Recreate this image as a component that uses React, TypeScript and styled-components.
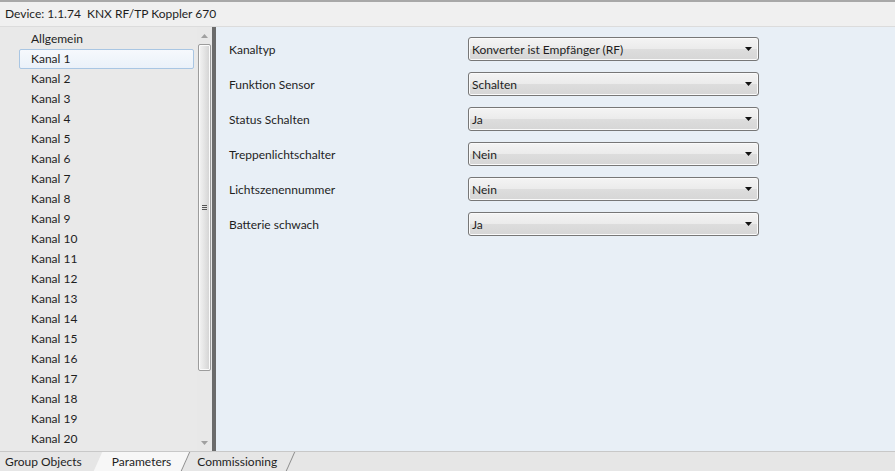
import styled, { createGlobalStyle } from 'styled-components'

const GlobalStyle = createGlobalStyle`
  html, body { margin: 0; padding: 0; }
  body {
    font-family: Lato, "Noto Sans", sans-serif;
    font-size: 12px;
    color: #1e1e1e;
    background: #f0f0f0;
  }
`

const channels = ['Allgemein', ...Array.from({ length: 20 }, (_, i) => `Kanal ${i + 1}`)]

const params = [
  { label: 'Kanaltyp', value: 'Konverter ist Empfänger (RF)' },
  { label: 'Funktion Sensor', value: 'Schalten' },
  { label: 'Status Schalten', value: 'Ja' },
  { label: 'Treppenlichtschalter', value: 'Nein' },
  { label: 'Lichtszenennummer', value: 'Nein' },
  { label: 'Batterie schwach', value: 'Ja' },
]

function Arrow({ up }: { up?: boolean }) {
  return (
    <svg width="7" height="4" viewBox="0 0 7 4">
      <path d={up ? 'M0 4L3.5 0L7 4z' : 'M0 0L7 0L3.5 4z'} fill="#a0a0a0" />
    </svg>
  )
}

export default function App() {
  return (
    <>
      <GlobalStyle />
      <Window>
        <Header>Device: 1.1.74&nbsp;&nbsp;KNX RF/TP Koppler 670</Header>
        <Body>
          <TreePanel>
            <List>
              {channels.map((c, i) => (
                <Item key={c} selected={i === 1}>{c}</Item>
              ))}
            </List>
            <ScrollBar>
              <ScrollButton><Arrow up /></ScrollButton>
              <Track>
                <Thumb>
                  <Grip />
                </Thumb>
              </Track>
              <ScrollButton><Arrow /></ScrollButton>
            </ScrollBar>
          </TreePanel>
          <Splitter />
          <ParamPanel>
            {params.map(p => (
              <Row key={p.label}>
                <Label>{p.label}</Label>
                <Combo>
                  <span>{p.value}</span>
                  <svg width="7" height="4" viewBox="0 0 7 4">
                    <path d="M0 0L7 0L3.5 4z" fill="#111" />
                  </svg>
                </Combo>
              </Row>
            ))}
          </ParamPanel>
        </Body>
        <TabBar>
          <Tab>Group Objects</Tab>
          <Tab active>Parameters</Tab>
          <Tab>Commissioning</Tab>
        </TabBar>
      </Window>
    </>
  )
}

const Window = styled.div`
  width: 895px;
  height: 471px;
  display: flex;
  flex-direction: column;
  border-top: 2px solid #a8a8a8;
  box-sizing: border-box;
  overflow: hidden;
`

const Header = styled.div`
  height: 25px;
  padding: 4px 0 0 5px;
  box-sizing: border-box;
  background: #f0f0f0;
  border-bottom: 1px solid #dcdcdc;
`

const Body = styled.div`
  flex: 1;
  display: flex;
  min-height: 0;
`

const TreePanel = styled.div`
  width: 212px;
  display: flex;
  background: #e9e9e9;
`

const List = styled.div`
  flex: 1;
  padding: 2px 0 0 19px;
  display: flex;
  flex-direction: column;
`

const Item = styled.div<{ selected?: boolean }>`
  height: 20px;
  line-height: 18px;
  margin-right: 3px;
  padding-left: 11px;
  box-sizing: border-box;
  border: 1px solid ${p => (p.selected ? '#a9c6e3' : 'transparent')};
  border-radius: 2px;
  background: ${p => (p.selected ? 'linear-gradient(#f6f9fd, #eaf1f9)' : 'transparent')};
  white-space: nowrap;
`

const ScrollBar = styled.div`
  width: 15px;
  display: flex;
  flex-direction: column;
  background: #e8e8e8;
`

const ScrollButton = styled.div`
  height: 17px;
  display: flex;
  align-items: center;
  justify-content: center;
`

const Track = styled.div`
  flex: 1;
  padding: 0 1px;
`

const Thumb = styled.div`
  height: 327px;
  box-sizing: border-box;
  border: 1px solid #9c9c9c;
  border-radius: 2px;
  background: linear-gradient(90deg, #f4f4f4, #e2e2e2 55%, #d2d2d2);
  box-shadow: inset 0 0 0 1px #fbfbfb;
  display: flex;
  align-items: center;
  justify-content: center;
`

const Grip = styled.div`
  width: 5px;
  height: 5px;
  border-top: 1px solid #555;
  border-bottom: 1px solid #555;
  box-sizing: border-box;
  background: linear-gradient(#555, #555) center / 100% 1px no-repeat;
`

const Splitter = styled.div`
  width: 4px;
  background: #6b6b6b;
`

const ParamPanel = styled.div`
  flex: 1;
  background: #e8eff6;
  padding: 10px 0 0 13px;
  display: flex;
  flex-direction: column;
  gap: 11px;
`

const Row = styled.div`
  display: flex;
  align-items: center;
  height: 24px;
`

const Label = styled.div`
  width: 239px;
`

const Combo = styled.div`
  width: 291px;
  height: 24px;
  box-sizing: border-box;
  border: 1px solid #777;
  border-radius: 3px;
  background: linear-gradient(#f4f4f4, #ebebeb 50%, #dddddd 51%, #d6d6d6);
  display: flex;
  align-items: center;
  justify-content: space-between;
  padding: 0 6px 0 3px;
  box-shadow: inset 0 0 0 1px #fafafa;
`

const TabBar = styled.div`
  height: 20px;
  display: flex;
  align-items: stretch;
  background: #e6e6e6;
  border-top: 1px solid #c8c8c8;
  box-sizing: border-box;
  padding-left: 5px;
`

const Tab = styled.div<{ active?: boolean }>`
  position: relative;
  padding: 0 14px 0 12px;
  display: flex;
  align-items: center;
  z-index: ${p => (p.active ? 1 : 0)};

  &:first-child {
    padding: 0 18px 0 0;
  }

  &::before {
    content: '';
    position: absolute;
    inset: 0 0 0 -2px;
    background: ${p => (p.active ? '#f7f7f7' : 'transparent')};
    transform: skewX(-24deg);
    border-right: 1px solid #8c8c8c;
    z-index: -1;
  }
`
